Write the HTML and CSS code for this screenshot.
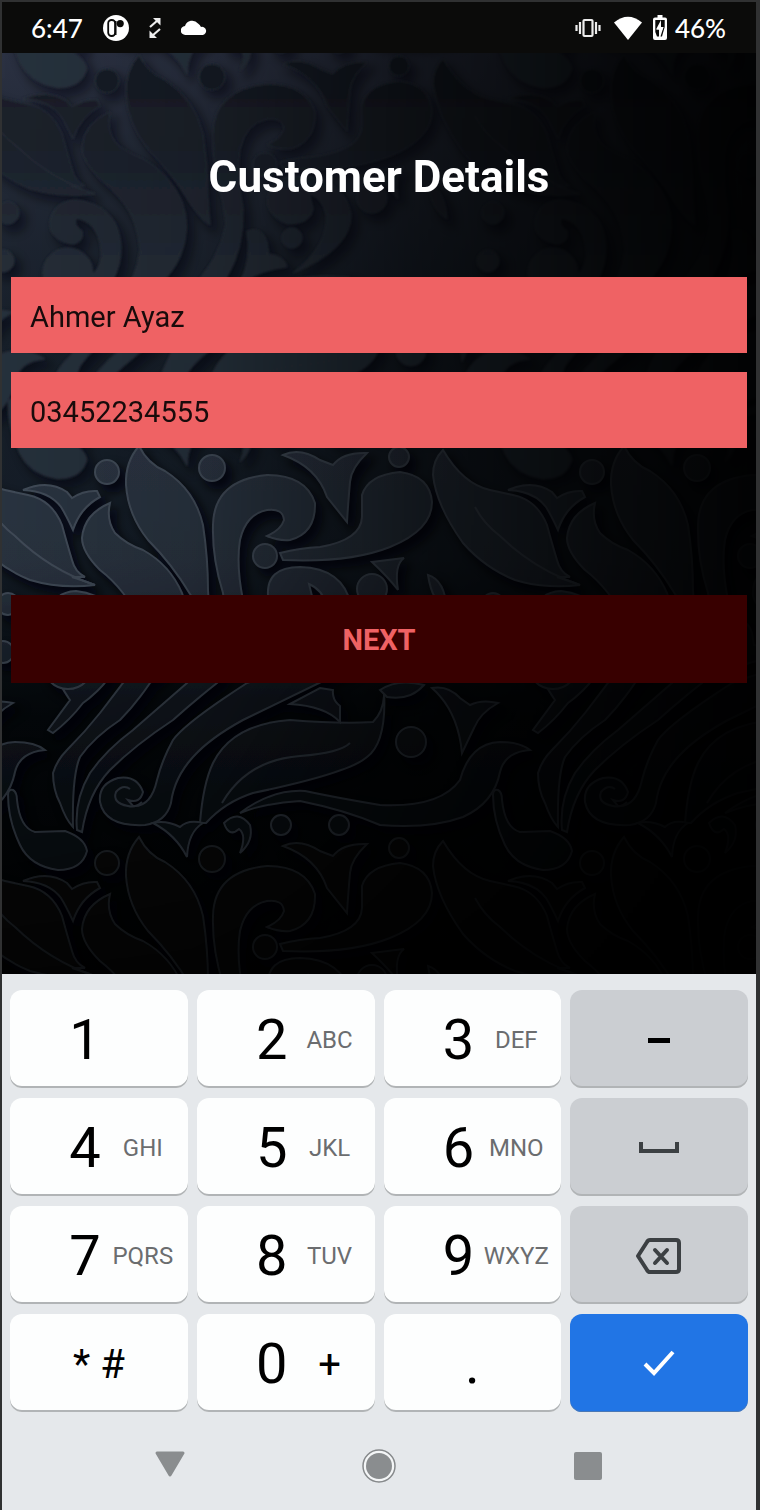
FILE: index.html
```html
<!DOCTYPE html>
<html lang="en">
<head>
<meta charset="utf-8">
<meta name="viewport" content="width=device-width, initial-scale=1">
<title>Customer Details</title>
<link rel="stylesheet" href="styles.css">
</head>
<body>
<div class="phone">
  <header class="status">
    <div class="status-group">
      <span class="status-text">6:47</span>
      <svg class="ico-app" viewBox="0 0 26 26" aria-hidden="true"><circle cx="13" cy="13" r="13" fill="#fff"/><rect x="5.200" y="5" width="7" height="16" rx="3.300" fill="#fff" stroke="#0b0b0a" stroke-width="1.800"/><path d="M12.500 6v14" stroke="#0b0b0a" stroke-width="2"/><circle cx="17.200" cy="8.600" r="3.600" fill="#0b0b0a"/></svg>
      <svg class="ico-sync" viewBox="0 0 12 22" aria-hidden="true"><path fill="none" stroke="#ededed" stroke-width="2.200" d="M1 10l8-7M11 12l-8 7"/><path fill="#ededed" d="M4 1h7.500v7.500zM.5 13.500V21H8z"/></svg>
      <svg class="ico-cloud" viewBox="0 0 26 16" aria-hidden="true"><path fill="#fff" d="M4.500 15a4.500 4.500 0 0 1-.5-9A7.500 7.500 0 0 1 17 3.500q2 1 3 3.500a4 4 0 0 1 2 8z"/></svg>
    </div>
    <div class="status-group status-right">
      <svg class="ico-vibrate" viewBox="0 0 26 20" fill="none" stroke="#ededed" stroke-width="2.200" aria-hidden="true"><rect x="8.500" y="2" width="9" height="16" rx="1"/><path d="M5 4v12M21 4v12M1.500 7v6M24.500 7v6"/></svg>
      <svg class="ico-wifi" viewBox="0 0 28 24" aria-hidden="true"><path fill="#fff" d="M0 6.500Q14-5 28 6.500L14 24z"/></svg>
      <svg class="ico-battery" viewBox="0 0 14 25" aria-hidden="true"><path fill="#fff" d="M4.500 0h5v2.500H12a2 2 0 0 1 2 2V23a2 2 0 0 1-2 2H2a2 2 0 0 1-2-2V4.500a2 2 0 0 1 2-2h2.500z"/><path fill="#0b0b0a" d="M2.300 5h9.400v7L9 21.500H7.500l3-9.500H8V5L3 14.500h3v7H4L2.300 17z"/><path fill="#fff" d="M8 7.500L4 14.500h2.500v5.500l4-7.500H8z"/></svg>
      <span class="status-text">46%</span>
    </div>
  </header>

  <main class="screen">
    <svg class="damask" viewBox="2 53 754 921" preserveAspectRatio="xMidYMin slice" aria-hidden="true">
      <defs>
        <g id="motif">
          <path d="M8 795Q8 789 13 790Q17 792 17 800Q20 828 35 832L65 831Q85 838 87 851Q82 870 58 870Q30 866 20 845Q8 820 8 795Z"/>
          <circle cx="107" cy="472" r="12"/><circle cx="212" cy="468" r="13"/>
          <circle cx="265" cy="556" r="12"/><circle cx="399" cy="457" r="10"/>
          <path d="M139 446Q125 462 126 485Q128 515 148 540Q172 564 190 594Q202 612 210 616Q209 606 208 590Q208 558 203 525Q195 490 165 471Q148 464 139 446Z"/>
          <path d="M110 503Q106 520 115 533Q126 544 143 550Q170 565 182 593Q192 618 180 648Q170 670 150 683Q135 705 120 720Q94 737 80 757Q72 775 73 827Q66 820 60 803Q53 790 53 773Q57 760 67 750Q85 732 100 713L123 683Q136 670 140 641Q138 612 123 593Q113 580 100 570Q82 552 82 538Q84 514 110 503Z"/>
          <path d="M443 450Q433 460 433 475Q436 505 463 543Q485 568 515 580Q545 589 580 585Q570 581 557 577L570 577Q560 572 557 560Q551 540 547 525Q537 500 513 495L490 490Q463 484 443 450Z"/>
          <path fill="none" d="M475 507Q484 524 500 536Q535 570 580 585"/>
          <path d="M23 490Q48 479 67 492L72 498Q84 490 97 491L100 497Q80 508 73 530Q66 515 61 507Q49 491 23 490Z"/>
          <path d="M223 593Q212 558 213 525Q214 480 267 475Q306 475 315 503Q316 533 290 540Q278 541 267 536Q281 530 284 520Q283 508 267 510Q246 514 240 540Q236 565 243 600Q244 640 227 668Q224 676 217 683Q193 702 173 720Q135 745 110 770Q88 793 82 832L77 830Q74 800 90 773Q106 750 133 730L187 683Q220 652 226 615Z"/>
          <path d="M283 455Q300 447 320 460L333 465Q343 452 367 453Q351 468 350 482Q348 505 347 522L327 497Q317 467 283 455Z"/>
          <path d="M280 553Q300 548 320 547Q361 540 362 517V495Q368 475 400 472Q430 476 432 502Q432 530 390 547Q350 563 283 560Z"/>
          <path d="M268 596Q266 567 300 567Q343 568 351 605Q352 640 293 664Q330 635 326 605Q323 590 309 584L313 600Q311 615 288 615Q272 610 268 596Z"/>
          <path d="M73 635Q50 632 50 614Q53 592 76 591Q119 596 121 638Q122 675 83 703Q70 720 53 733L48 730L70 700Q64 692 60 683Q105 670 101 640Q98 613 76 609Q73 616 82 622Q84 633 73 635Z"/>
          <circle cx="68" cy="664" r="25"/><circle cx="292" cy="629" r="10"/><circle cx="3" cy="652" r="11"/><circle cx="8" cy="604" r="11"/>
          <path d="M247 622Q262 617 267 633L269 645Q285 647 287 658Q262 661 240 674Q252 650 247 622Z"/>
          <path d="M247 683Q185 723 173 740Q162 760 157 780Q151 807 133 806L128 800Q140 804 143 792Q137 775 118 778Q98 784 100 802Q105 827 145 825Q166 822 171 803Q174 778 193 757Q210 738 243 720L350 668Q300 662 247 683Z"/>
          <path fill="none" d="M142 802Q136 808 128 806Q112 803 116 792Q123 784 130 789"/>
          <path d="M200 823Q203 784 213 763Q232 724 290 720Q340 724 373 722Q385 710 384 690Q387 742 367 757Q349 773 253 793Q225 802 206 823Z"/>
          <path fill="none" d="M222 803Q247 760 300 756Q340 753 350 743"/>
          <path d="M240 813Q272 789 305 791Q338 798 380 805Q440 808 460 780Q470 743 500 742Q520 742 530 750Q505 752 500 772Q494 803 463 817Q430 829 380 825Q345 810 300 801Q265 803 240 813Z"/>
          <circle cx="411" cy="742" r="15"/><circle cx="281" cy="825" r="10"/><circle cx="339" cy="825" r="10"/>
          <path d="M432 688Q448 685 460 698L470 705Q482 699 498 703Q480 713 474 728L462 753Q458 711 432 688Z"/>
          <path d="M290 704L320 688L333 690Q332 700 340 706V722Q325 706 290 704Z"/>
          <path d="M153 823Q166 820 180 827Q188 819 203 823Q188 832 187 857Q176 835 153 823Z"/>
          <path d="M224 823Q238 809 250 825Q254 841 240 853Q247 835 239 829Q229 838 224 823Z"/>
          <path d="M372 562L404 558Q394 565 398 590Q388 577 372 562Z"/><circle cx="372" cy="589" r="15"/>
          <path d="M428 575Q445 580 447 610Q432 602 428 575Z"/>
          <path d="M380 690Q398 678 424 685Q410 701 387 697Z"/>
        </g>
        <g id="row">
          <use href="#motif" x="-485"/><use href="#motif"/><use href="#motif" x="485"/>
        </g>
        <filter id="soft"><feGaussianBlur stdDeviation="0.6"/></filter>
        <filter id="softer"><feGaussianBlur stdDeviation="1.2"/></filter>
        <filter id="shade" x="-10%" y="-10%" width="120%" height="120%"><feGaussianBlur stdDeviation="5"/></filter>
        <linearGradient id="base" x1="0" y1="0" x2="0" y2="1"><stop offset="0" stop-color="#2b3142"/><stop offset=".14" stop-color="#222936"/><stop offset=".3" stop-color="#18202b"/><stop offset=".55" stop-color="#141d27"/><stop offset=".72" stop-color="#050a0e"/><stop offset="1" stop-color="#020405"/></linearGradient>
        <linearGradient id="reliefTop" gradientUnits="userSpaceOnUse" x1="0" y1="448" x2="0" y2="690"><stop offset="0" stop-color="#171c25"/><stop offset=".45" stop-color="#1e242e"/><stop offset="1" stop-color="#28313d"/></linearGradient>
        <linearGradient id="relief" gradientUnits="userSpaceOnUse" x1="0" y1="448" x2="0" y2="839"><stop offset="0" stop-color="#2d3644"/><stop offset=".35" stop-color="#2a3340"/><stop offset=".65" stop-color="#151d27"/><stop offset="1" stop-color="#0d131a"/></linearGradient>
        <linearGradient id="fadeX"><stop offset="0" stop-color="#000" stop-opacity="0"/><stop offset=".25" stop-color="#000" stop-opacity=".12"/><stop offset=".55" stop-color="#000" stop-opacity=".56"/><stop offset=".8" stop-color="#000" stop-opacity=".8"/><stop offset="1" stop-color="#000" stop-opacity=".94"/></linearGradient>
        <linearGradient id="fadeY" x1="0" y1="0" x2="0" y2="1"><stop offset="0" stop-color="#000" stop-opacity="0"/><stop offset=".55" stop-color="#000" stop-opacity=".04"/><stop offset=".7" stop-color="#000" stop-opacity=".3"/><stop offset=".85" stop-color="#000" stop-opacity=".45"/><stop offset="1" stop-color="#000" stop-opacity=".7"/></linearGradient>
      </defs>
      <rect x="2" y="53" width="754" height="921" fill="url(#base)"/>
      <g class="cast cast-top" filter="url(#shade)"><use href="#row" x="6" y="-775"/><use href="#row" x="6" y="-384"/></g>
      <g class="cast" filter="url(#shade)"><use href="#row" x="6" y="7"/><use href="#row" x="6" y="398"/></g>
      <g class="relief-top" filter="url(#softer)"><use href="#row" y="-782"/><use href="#row" y="-391"/></g>
      <g filter="url(#soft)">
        <g class="relief"><use href="#row"/></g>
        <g class="relief-low"><use href="#row" y="391"/></g>
      </g>
      <rect x="2" y="53" width="754" height="921" fill="url(#fadeX)"/>
      <rect x="2" y="53" width="754" height="921" fill="url(#fadeY)"/>
    </svg>
    <form class="form">
      <h1 class="title">Customer Details</h1>
      <input class="field" type="text" aria-label="Customer name" value="Ahmer Ayaz">
      <input class="field" type="tel" aria-label="Phone number" value="03452234555">
      <button class="next" type="button">NEXT</button>
    </form>
  </main>

  <section class="keyboard" aria-label="Numeric keyboard">
    <div class="keys">
      <button class="key"><span class="digit">1</span></button>
      <button class="key"><span class="digit">2</span><span class="letters">ABC</span></button>
      <button class="key"><span class="digit">3</span><span class="letters">DEF</span></button>
      <button class="key key-grey" aria-label="Minus"><svg class="glyph" viewBox="0 0 48 48"><path d="M13 24.500h22" stroke="#000" stroke-width="5"/></svg></button>
      <button class="key"><span class="digit">4</span><span class="letters">GHI</span></button>
      <button class="key"><span class="digit">5</span><span class="letters">JKL</span></button>
      <button class="key"><span class="digit">6</span><span class="letters">MNO</span></button>
      <button class="key key-grey" aria-label="Space"><svg class="glyph" viewBox="0 0 48 48"><path d="M6 18v9h36v-9" fill="none" stroke="#3c4043" stroke-width="4"/></svg></button>
      <button class="key"><span class="digit">7</span><span class="letters">PQRS</span></button>
      <button class="key"><span class="digit">8</span><span class="letters">TUV</span></button>
      <button class="key"><span class="digit">9</span><span class="letters">WXYZ</span></button>
      <button class="key key-grey" aria-label="Backspace"><svg class="glyph" viewBox="0 0 48 48" fill="none" stroke="#3c4043" stroke-width="4" stroke-linejoin="round" stroke-linecap="round"><path d="M15 8h26q3 0 3 3v26q0 3-3 3H15q-2 0-3-2L3 24l9-14q1-2 3-2z"/><path d="M20 18l12 13M32 18L20 31"/></svg></button>
      <button class="key key-plain"><span class="symbols">* #</span></button>
      <button class="key"><span class="digit">0</span><span class="plus">+</span></button>
      <button class="key key-plain"><span class="digit">.</span></button>
      <button class="key key-blue" aria-label="Done"><svg class="glyph" viewBox="0 0 48 48"><path d="M10 24l9 9 19-21" fill="none" stroke="#fff" stroke-width="4"/></svg></button>
    </div>
    <nav class="nav">
      <button class="nav-btn" aria-label="Hide keyboard"><svg viewBox="0 0 34 34"><path d="M4 4h26L17 26z" fill="#8a8d8f" stroke="#8a8d8f" stroke-width="3" stroke-linejoin="round"/></svg></button>
      <button class="nav-btn" aria-label="Home"><svg viewBox="0 0 34 34"><circle cx="17" cy="17" r="16" fill="#f4f6f7" stroke="#86898b" stroke-width="1.500"/><circle cx="17" cy="17" r="13" fill="#8a8d8f"/></svg></button>
      <button class="nav-btn" aria-label="Recent apps"><svg viewBox="0 0 34 34"><rect x="3" y="3" width="28" height="28" rx="2" fill="#8a8d8f"/></svg></button>
    </nav>
  </section>
</div>
</body>
</html>
```

FILE: styles.css
```css
* {
  box-sizing: border-box;
}

body {
  margin: 0;
  background: #303132;
  font-family: Roboto, "Liberation Sans", sans-serif;
}

button,
input {
  margin: 0;
  border: 0;
  border-radius: 0;
  font-family: inherit;
}

.phone {
  display: flex;
  flex-direction: column;
  min-height: 100vh;
  padding: 2px 4px 0 2px;
}

/* Status bar */
.status {
  display: flex;
  justify-content: space-between;
  align-items: center;
  height: 51px;
  padding: 0 30px 0 29px;
  background: #0b0b0a;
  color: #fff;
}

.status-group {
  display: flex;
  align-items: center;
  gap: 20px;
}

.status-right {
  gap: 8px;
}

.status-text {
  font-family: Lato, Roboto, sans-serif;
  font-weight: 500;
  font-size: 26px;
  line-height: 32px;
}

.ico-app {
  width: 26px;
  height: 26px;
}

.ico-sync {
  width: 12px;
  height: 22px;
}

.ico-cloud {
  width: 26px;
  height: 16px;
}

.ico-vibrate {
  width: 26px;
  height: 20px;
  margin-right: 5px;
}

.ico-wifi {
  width: 28px;
  height: 24px;
  margin-right: 3px;
}

.ico-battery {
  width: 14px;
  height: 25px;
}

/* App screen */
.screen {
  position: relative;
  flex: 1;
  background: #000;
  overflow: hidden;
}

.damask {
  position: absolute;
  inset: 0;
  width: 100%;
  height: 100%;
}

.cast {
  fill: #020408;
  stroke: #020408;
  stroke-width: 4;
  opacity: 0.75;
}

.cast-top {
  opacity: 0.45;
}

.relief-top {
  fill: url(#reliefTop);
  stroke: #2b333e;
  stroke-width: 1;
}

.relief {
  fill: url(#relief);
  stroke: #434d5a;
  stroke-width: 2;
}

.relief-low {
  fill: #070c10;
  stroke: #2f363c;
  stroke-width: 2;
}

.form {
  position: relative;
  display: flex;
  flex-direction: column;
  padding: 98px 9px 0;
}

.title {
  margin: 0 0 74px;
  color: #fff;
  font-size: 44px;
  font-weight: 700;
  line-height: 52px;
  text-align: center;
}

.field {
  width: 100%;
  height: 76px;
  margin-bottom: 19px;
  padding: 4px 19px 0;
  background: #ef6264;
  color: #190b0b;
  font-size: 29px;
  outline: 0;
}

.next {
  height: 88px;
  margin-top: 128px;
  padding: 2px 0 0;
  background: #380000;
  color: #ef6264;
  font-size: 29px;
  font-weight: 700;
}

/* Keyboard */
.keyboard {
  padding: 16px 8px 0;
  background: #e5e8eb;
}

.keys {
  display: grid;
  grid-template-columns: repeat(4, 1fr);
  grid-auto-rows: 98px;
  gap: 10px 9px;
}

.key {
  display: grid;
  grid-template-columns: 59fr 32fr 84fr 3fr;
  align-items: center;
  justify-items: center;
  padding: 2px 0 0;
  border-radius: 12px;
  background: #fdfefe;
  box-shadow: inset 0 -2px 0 #b1b4b6;
  color: #000;
}

.key-plain,
.key-grey,
.key-blue {
  grid-template-columns: 1fr;
}

.key-grey {
  background: #cbced2;
}

.key-blue {
  background: #2175e5;
  box-shadow: inset 0 -1px 0 #4a78b5;
}

.digit {
  grid-column: 2;
  font-size: 56px;
  line-height: 64px;
}

.key-plain .digit {
  grid-column: 1;
}

.letters {
  grid-column: 3;
  color: #6b6d6f;
  font-size: 24px;
}

.plus {
  grid-column: 3;
  font-size: 40px;
}

.symbols {
  font-size: 40px;
}

.glyph {
  width: 48px;
  height: 48px;
}

.nav {
  display: flex;
  justify-content: space-around;
  padding: 37px 56px 27px;
}

.nav-btn {
  display: flex;
  padding: 0;
  background: none;
}

.nav-btn svg {
  width: 34px;
  height: 34px;
}
```
